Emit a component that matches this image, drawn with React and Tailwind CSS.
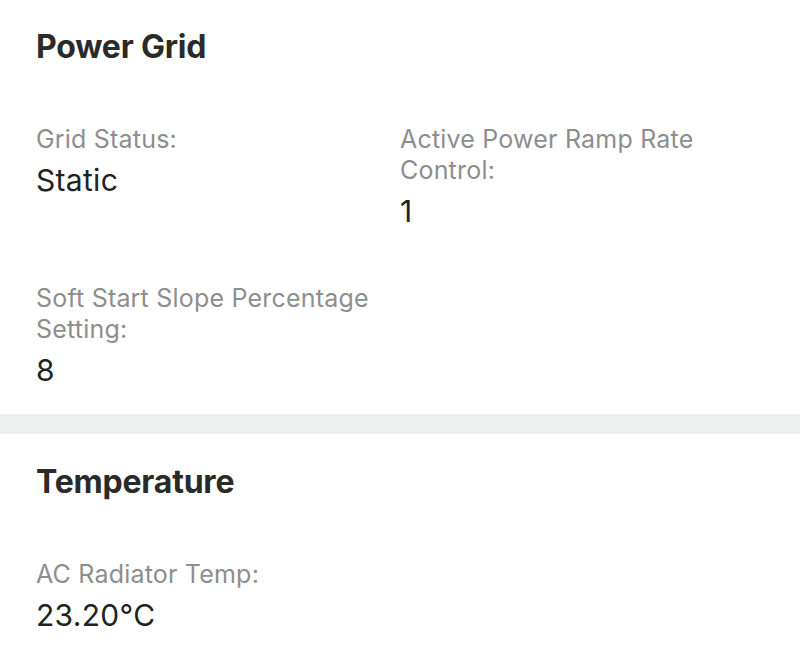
import React from "react";

function Field({ label, value }) {
  return (
    <div className="flex flex-col">
      <div className="text-[25px] leading-[31px] tracking-[0.2px] text-[#8e8e8e] pr-4">{label}</div>
      <div className="mt-[7px] text-[30px] leading-[36px] tracking-[0.3px] text-[#222222]">{value}</div>
    </div>
  );
}

export default function App() {
  return (
    <div className="w-[800px] h-[653px] bg-white overflow-hidden" style={{ fontFamily: "Inter, 'Noto Sans', sans-serif" }}>
      <section className="px-[36px] pt-[27px] pb-[26px]">
        <h2 className="text-[32px] leading-[40px] font-bold text-[#2a2a2a] tracking-[-0.2px]">Power Grid</h2>
        <div className="mt-[57px] grid grid-cols-2 gap-y-[54px]">
          <Field label="Grid Status:" value="Static" />
          <Field label={<>Active Power Ramp Rate<br />Control:</>} value="1" />
          <Field label={<>Soft Start Slope Percentage<br />Setting:</>} value="8" />
        </div>
      </section>
      <div className="h-[20px] bg-[#eef0ef]" />
      <section className="px-[36px] pt-[28px] pb-[28px]">
        <h2 className="text-[32px] leading-[40px] font-bold text-[#2a2a2a] tracking-[-0.2px]">Temperature</h2>
        <div className="mt-[57px] grid grid-cols-2">
          <Field label="AC Radiator Temp:" value="23.20°C" />
        </div>
      </section>
    </div>
  );
}
